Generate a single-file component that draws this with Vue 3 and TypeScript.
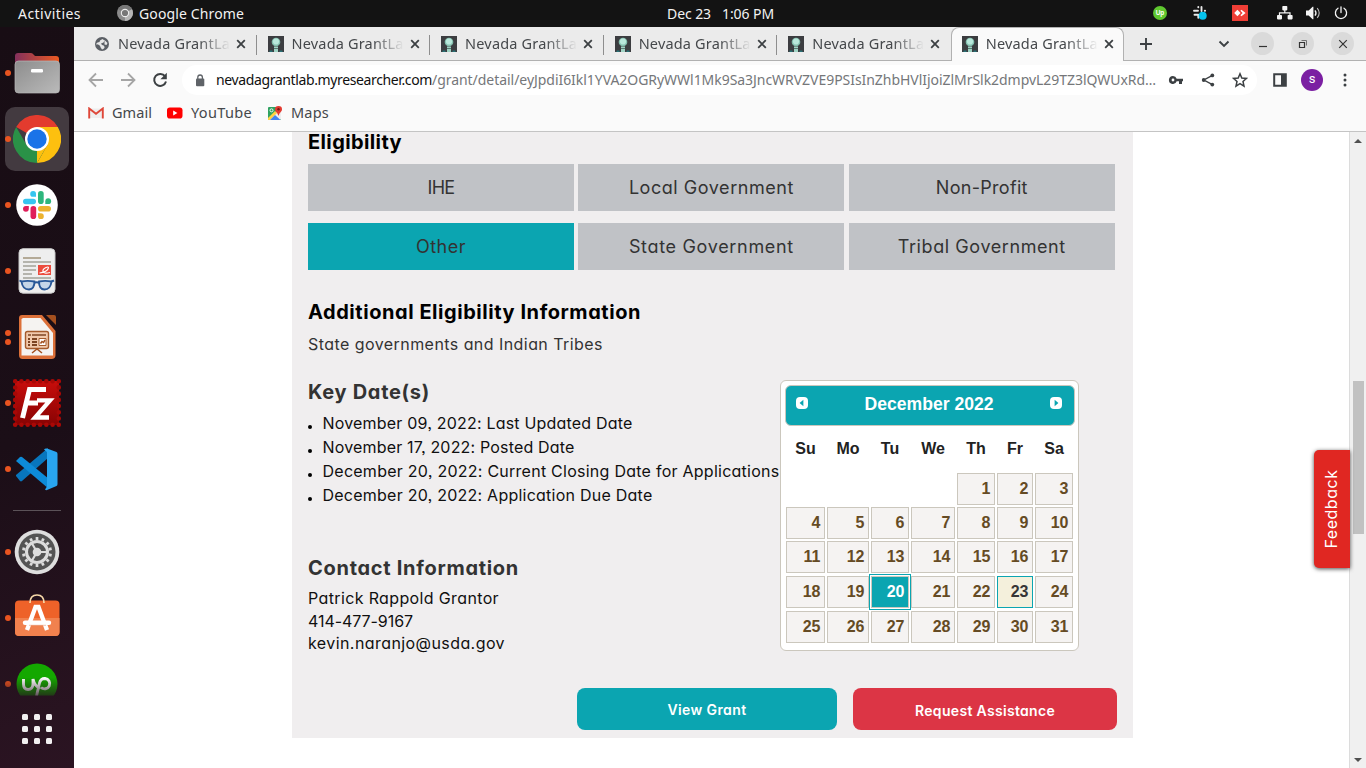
<script setup lang="ts">
import type { Directive } from 'vue'

// Tracks a single line of text so that it spans the given width in pixels.
const vFit: Directive<HTMLElement, number> = {
  mounted(el, { value }) {
    const chars = (el.textContent ?? '').trim().length
    const natural = parseFloat(getComputedStyle(el).width)
    if (chars > 0 && natural > 0) el.style.letterSpacing = `${(value - natural) / chars}px`
  },
}

interface Label { text: string; width: number }
interface Eligibility extends Label { active?: boolean }

const tabs = [0, 1, 2, 3, 4, 5]
const dockApps = ['files', 'chrome', 'slack', 'reader', 'impress', 'filezilla', 'code'] as const
const dockTools = ['settings', 'software', 'upwork'] as const

const eligibility: Eligibility[] = [
  { text: 'IHE', width: 27 },
  { text: 'Local Government', width: 165 },
  { text: 'Non-Profit', width: 92 },
  { text: 'Other', width: 50, active: true },
  { text: 'State Government', width: 165 },
  { text: 'Tribal Government', width: 168 },
]

const keyDates: Label[] = [
  { text: 'November 09, 2022: Last Updated Date', width: 310 },
  { text: 'November 17, 2022: Posted Date', width: 252 },
  { text: 'December 20, 2022: Current Closing Date for Applications', width: 457 },
  { text: 'December 20, 2022: Application Due Date', width: 330 },
]

const contact: Label[] = [
  { text: 'Patrick Rappold Grantor', width: 191 },
  { text: '414-477-9167', width: 105 },
  { text: 'kevin.naranjo@usda.gov', width: 197 },
]

const dayNames = ['Su', 'Mo', 'Tu', 'We', 'Th', 'Fr', 'Sa']
const firstWeekday = 4
const weeks: number[][] = Array.from({ length: 5 }, (_, w) =>
  Array.from({ length: 7 }, (_, d) => w * 7 + d - firstWeekday + 1),
)
const teeth = Array.from({ length: 14 }, (_, i) => (i * 360) / 14)
</script>

<template>
  <div class="desktop">
    <header class="topbar">
      <span class="activities"><span v-fit="63" class="fit">Activities</span></span>
      <svg class="top-chrome" width="16" height="16" viewBox="0 0 16 16">
        <circle cx="8" cy="8" r="8" fill="#8b8b8b" />
        <path d="M8 8 1 4.2A8 8 0 0 1 15 4.2Z" fill="#777" />
        <path d="M8 8 15 4.2A8 8 0 0 1 8 16Z" fill="#b5b5b5" />
        <circle cx="8" cy="8" r="4.2" fill="#eee" />
        <circle cx="8" cy="8" r="3.1" fill="#777" />
      </svg>
      <span v-fit="105" class="fit">Google Chrome</span>
      <span class="clock"><span v-fit="44" class="fit">Dec 23</span><span v-fit="52" class="fit">1:06 PM</span></span>
      <span class="tray">
        <svg width="14" height="14" viewBox="0 0 14 14"><circle cx="7" cy="7" r="7" fill="#5fc82f" /><text x="7" y="9.2" text-anchor="middle" class="up-mini">Up</text></svg>
        <svg width="16" height="16" viewBox="0 0 16 16" fill="none" stroke="#e8e8e8" stroke-width="1.9" stroke-linecap="round">
          <path d="M2 5.700h4M6.300 2v.3M9.500 2v4M12.800 5.700h.3M2.500 9.700h3M6.300 9.800v3" /><circle cx="10.700" cy="10.700" r="4" fill="#05c3ee" stroke="none" />
        </svg>
        <svg width="16" height="16" viewBox="0 0 16 16"><path fill="#ef3e36" d="M0 0h16v16H0z" /><path fill="#fff" d="m5.400 4.800 3.200 3.200-3.200 3.200L2.200 8zM9.400 4.800 13.600 8l-4.200 3.200-1-1L10.600 8 8.400 5.800z" /></svg>
        <svg width="16" height="14" viewBox="0 0 16 14" fill="#f4f4f4"><rect x="5.3" y="0" width="5" height="4.4" rx=".8" /><rect x="0" y="9" width="5" height="4.4" rx=".8" /><rect x="10.6" y="9" width="5" height="4.4" rx=".8" /><path d="M7.2 4h1.2v2.2h5.2V9h-1.2V7.4H3.1V9H1.9V6.2h5.3z" /></svg>
        <svg width="15" height="14" viewBox="0 0 15 14" fill="none" stroke="#f4f4f4"><path fill="#f4f4f4" stroke="none" d="M0 4.6h2.7L6.6.8h.8v12.4h-.8L2.7 9.4H0z" /><path d="M9 4.3q2 2.7 0 5.4" stroke-width="1.3" /><path d="M11.2 2.2q4 4.8 0 9.6" stroke="#bbb" stroke-width="1.1" /></svg>
        <svg width="14" height="14" viewBox="0 0 14 14" fill="none" stroke="#f4f4f4" stroke-width="1.3" stroke-linecap="round"><path d="M7 .8v5.700M4 2.200a5.600 5.600 0 1 0 6 0" /></svg>
      </span>
    </header>

    <div class="workspace">
      <aside class="dock">
        <div v-for="app in dockApps" :key="app" class="slot" :class="{ focused: app === 'chrome' }">
          <span class="dots"><i /><i v-if="app === 'impress'" /></span>
          <svg v-if="app === 'files'" width="48" height="48" viewBox="0 0 48 48">
            <defs><linearGradient id="tabg"><stop stop-color="#84305c" /><stop offset="1" stop-color="#ec5a22" /></linearGradient><linearGradient id="box" x1="0" y1="0" x2="1" y2="1"><stop stop-color="#8d8d8d" /><stop offset="1" stop-color="#bababa" /></linearGradient></defs>
            <path d="M2 7q0-3 3-3h13q1.500 0 3 2l1 1h21q3 0 3 3v18H2z" fill="url(#tabg)" />
            <rect x="2" y="12" width="44.500" height="32" rx="3.500" fill="url(#box)" stroke="#b9b9b9" stroke-width=".7" /><rect x="18" y="20" width="12" height="3.400" rx="1.200" fill="#fff" />
          </svg>
          <svg v-else-if="app === 'chrome'" width="48" height="48" viewBox="0 0 48 48">
            <path d="M24 24 3.200 12A24 24 0 0 1 44.800 12Z" fill="#e33b2e" /><path d="M24 12H44.800A24 24 0 0 1 24 48L34.400 30Z" fill="#fdc00f" /><path d="M3.200 12 13.600 30 24 36H30.900L24 48A24 24 0 0 1 3.200 12Z" fill="#2a9147" /><path d="M24 36 34.400 30 24 48Z" fill="#fdc00f" />
            <circle cx="24" cy="24" r="12" fill="#fff" /><circle cx="24" cy="24" r="9.700" fill="#1a73e8" />
          </svg>
          <svg v-else-if="app === 'slack'" width="48" height="48" viewBox="0 0 48 48">
            <circle cx="24" cy="24" r="20.800" fill="#fff" />
            <g fill="#36c5f0"><rect x="10" y="17.700" width="13" height="5.600" rx="2.800" /><path d="M23 15.800h-2.800A2.900 2.900 0 1 1 23 13z" /></g>
            <g fill="#2eb67d"><rect x="25" y="10" width="5.700" height="13" rx="2.800" /><path d="M32.300 23v-2.800a2.900 2.900 0 1 1 2.900 2.900z" /></g>
            <g fill="#ecb22e"><rect x="25" y="25" width="13" height="5.600" rx="2.800" /><path d="M25 32.300h2.800a2.900 2.900 0 1 1-2.800 2.900z" /></g>
            <g fill="#e01e5a"><rect x="17.500" y="25" width="5.700" height="13" rx="2.800" /><path d="M15.800 25v2.800a2.900 2.900 0 1 1-2.900-2.900z" /></g>
          </svg>
          <svg v-else-if="app === 'reader'" width="48" height="48" viewBox="0 0 48 48">
            <rect x="6" y="1.700" width="36" height="44.500" rx="4" fill="#eee" stroke="#c9c9c9" />
            <path d="M10 11h18" stroke="#b4aa97" stroke-width="2" /><path d="M10 15h28M10 19h13M10 23h13M10 27h9M10 31h28" stroke="#b5b4ad" stroke-width="1.800" />
            <path fill="#ec4b3d" d="M25 18h13v10H25z" /><path d="M26.500 26q7-1 8.500-4t-2-1.500-3 4 7 1" fill="none" stroke="#fff" stroke-width="1.200" />
            <g fill="#c5d6e8" stroke="#285898" stroke-width="1.900"><path d="M8.500 34.500q6-1.300 13 0 0 7.500-5.500 8-6.500 0-7.500-8zM26 34.500q6-1.300 12.500 0-1 8-7 8-5.500 0-5.500-8z" /><path d="M21 36q2.500-1.500 5.500 0M6.500 33.500l2 1M41 33.500l-2.500 1" fill="none" /></g>
          </svg>
          <svg v-else-if="app === 'impress'" width="48" height="48" viewBox="0 0 48 48">
            <path d="M9 2h20l13.500 16v24q0 4-4 4H9.500Q6 46 6 42V5q0-3 3-3z" fill="#dc7039" /><path d="M10 5h17.500L40 20v22.500H8.500V6z" fill="#f5f3f1" /><path d="M33 2h8q2 0 2 2v8z" fill="#a5501f" />
            <rect x="12.500" y="18.500" width="23" height="17" rx="2" fill="#f1c9ac" stroke="#a45a2c" stroke-width="1.400" /><path d="M15 22h3m1 0h14" stroke="#7d4423" stroke-width="1.600" /><path d="M15 26h2m2 0h5M15 29h2m2 0h5M15 32h2m2 0h5" stroke="#7d4423" stroke-width="2" /><path d="M26 25.500h7v7h-7z" fill="#fff" stroke="#a45a2c" /><path d="m27.500 30.500 1.500-2 1.500 1 1.500-2.500M19 40l5-4 5 4" fill="none" stroke="#a4501f" stroke-width="1.500" />
          </svg>
          <svg v-else-if="app === 'filezilla'" width="50" height="50" viewBox="0 0 50 50">
            <defs><linearGradient id="fz" x1="0" y1="0" x2="0" y2="1"><stop stop-color="#c80d0b" /><stop offset="1" stop-color="#880303" /></linearGradient></defs>
            <rect x="3" y="3" width="44" height="44" fill="url(#fz)" /><rect x="3.200" y="3.200" width="43.600" height="43.600" fill="none" stroke="#a90806" stroke-width="4.600" stroke-dasharray="0 6.228" stroke-linecap="round" />
            <g fill="none" stroke="#fff" stroke-width="5"><path d="M10.500 40 17.500 11.500H34M13 25h13" /><path d="M25 22.300H38L23 39.500H37" stroke-width="4.300" /></g>
          </svg>
          <svg v-else width="48" height="48" viewBox="0 0 48 48">
            <path d="m3 31 4 5q1 .8 2 0L35 13V3L3 30z" fill="#0876bd" /><path d="m3 16 4-4q1-.7 2 0l27 22v10z" fill="#0d8bd8" /><path d="M34 3.500 43.500 7q1 .5 1 2v30q0 1.500-1 2L34 45q-1 .5-2-.5l2-3V7L31 4.500q1-1.500 3-1z" fill="#29a5ef" />
          </svg>
        </div>
        <div class="rule" />
        <div v-for="app in dockTools" :key="app" class="slot" :class="{ fading: app === 'upwork' }">
          <span class="dots"><i /></span>
          <svg v-if="app === 'settings'" width="48" height="48" viewBox="0 0 48 48">
            <circle cx="24" cy="24" r="22.300" fill="#dedede" /><circle cx="24" cy="24" r="18.500" fill="#545454" />
            <g stroke="#dcdcdc"><path v-for="a in teeth" :key="a" d="M24 12V9" stroke-width="2.700" :transform="`rotate(${a} 24 24)`" /></g>
            <circle cx="24" cy="24" r="10.500" fill="#545454" stroke="#dcdcdc" stroke-width="3" /><path d="m24 24 9 0M24 24l-5-8.500M24 24l-5 8.500" stroke="#dcdcdc" stroke-width="2.200" /><circle cx="24" cy="24" r="4.300" fill="#dcdcdc" />
          </svg>
          <svg v-else-if="app === 'software'" width="48" height="48" viewBox="0 0 48 48">
            <rect x="2" y="6.500" width="44.500" height="35.500" rx="4" fill="#ee6229" /><path d="M2 24h44.500v14q0 4-4 4H6q-4 0-4-4z" fill="#f1814e" /><path d="M17 9q0-8 7-8T31 9" fill="none" stroke="#f6d9a9" stroke-width="1.700" />
            <path d="m14 36 8.500-23h3L34 36" fill="none" stroke="#fff" stroke-width="4.300" /><path d="M12 28.700h24" stroke="#fff" stroke-width="4.400" stroke-linecap="round" /><path d="M16 31.300h17" stroke="#eba98c" stroke-width=".7" />
          </svg>
          <svg v-else width="48" height="48" viewBox="0 0 48 48">
            <circle cx="24" cy="24" r="20.500" fill="#14a800" /><path d="M10.500 19v5q0 5.500 4.600 5.500T20 24v-5q1.500 7 7 9.500M23.500 36l3-13q1-4.500 5.500-4.500a5.200 5.200 0 1 1-4 9" fill="none" stroke="#fff" stroke-width="2.900" />
          </svg>
        </div>
        <div class="app-grid"><i v-for="n in 9" :key="n" /></div>
      </aside>

      <main class="browser">
        <div class="tabstrip">
          <div v-for="t in tabs" :key="t" class="tab" :class="{ active: t === 5 }">
            <svg v-if="t === 0" width="16" height="16" viewBox="0 0 16 16"><circle cx="8" cy="8" r="7" fill="#5b5f65" /><path d="M2 8.500q1.500-.5 3 .5t1.500 2.200L8 13.500q3-1 2.500-2.800-.4-1.500-2.500-1.700l-1-1.500 2.500-1 1-2L8.500 3 6 4.500 5.500 6 3.500 6.500 2 8zM10.500 4l3 3-1 2-2-.5z" fill="#e6e6e6" /></svg>
            <svg v-else width="16" height="16" viewBox="0 0 16 16"><path fill="#3c3d40" d="M0 0h16v16H0z" /><circle cx="8" cy="6" r="4.300" fill="#84bfae" /><circle cx="8" cy="5.500" r="3.100" fill="#b9e8db" /><path d="M6 10.500h4V16H6z" fill="#a0d4c5" /><path d="M6 12.500h4" stroke="#58766f" /><path d="M1.500 15.300h3M11.500 15.300h3" stroke="#287277" stroke-width="1.500" /></svg>
            <span class="tab-title"><span v-fit="112" class="fit">Nevada GrantLa</span></span>
            <svg class="tab-x" width="10" height="10" viewBox="0 0 10 10"><path d="m1.200 1.200 7.600 7.600m0-7.600-7.600 7.600" stroke="#3c4043" stroke-width="1.800" /></svg>
          </div>
          <svg class="plus" width="12" height="12" viewBox="0 0 12 12"><path d="M6 0v12M0 6h12" stroke="#3c4043" stroke-width="1.900" /></svg>
          <svg class="chev" width="12" height="8" viewBox="0 0 12 8"><path d="m1.500 1.500 4.500 4.500 4.500-4.500" fill="none" stroke="#3c4043" stroke-width="1.900" /></svg>
          <span class="win"><svg width="10" height="10" viewBox="0 0 10 10"><path d="M1 7.500h8" stroke="#333" stroke-width="1.200" /></svg></span>
          <span class="win"><svg width="10" height="10" viewBox="0 0 10 10" fill="none" stroke="#333"><path d="M1.500 3.500h5v5h-5z" stroke-width="1.200" /><path d="M3.500 1.500h5v5" stroke="#666" stroke-width=".9" /></svg></span>
          <span class="win"><svg width="10" height="10" viewBox="0 0 10 10"><path d="m1.200 1.200 7.600 7.600m0-7.600-7.600 7.600" stroke="#333" stroke-width="1.200" /></svg></span>
        </div>

        <div class="toolbar">
          <svg width="16" height="16" viewBox="0 0 16 16" fill="none" stroke="#a5a5a5" stroke-width="1.800"><path d="M15 8H2M8 1.500 1.500 8 8 14.500" /></svg>
          <svg width="16" height="16" viewBox="0 0 16 16" fill="none" stroke="#a5a5a5" stroke-width="1.800"><path d="M1 8h13M8 1.500 14.500 8 8 14.500" /></svg>
          <svg width="16" height="16" viewBox="0 0 16 16"><path d="M13.100 4.400A6 6 0 1 0 14 9.500" fill="none" stroke="#3c4043" stroke-width="2" /><path d="M14.800.8v6.400H8.400z" fill="#3c4043" /></svg>
          <div class="omnibox">
            <svg width="10" height="13" viewBox="0 0 10 13"><rect x="1" y="4.600" width="8.300" height="7.700" rx="1" fill="#5f6368" /><path d="M2.800 5V3.300a2.300 2.300 0 0 1 4.600 0V5" fill="none" stroke="#5f6368" stroke-width="1.300" /></svg>
            <span class="url"><span v-fit="216" class="fit host">nevadagrantlab.myresearcher.com</span><span v-fit="724" class="fit path">/grant/detail/eyJpdiI6Ikl1YVA2OGRyWWl1Mk9Sa3JncWRVZVE9PSIsInZhbHVlIjoiZlMrSlk2dmpvL29TZ3lQWUxRd…</span></span>
            <svg class="key" width="16" height="10" viewBox="0 0 16 10"><path d="M5 1a4 4 0 1 0 3.700 5.300H11V9h3V6.300h1V3.700H8.700A4 4 0 0 0 5 1zm0 2.600a1.400 1.400 0 1 1 0 2.800 1.400 1.400 0 0 1 0-2.800z" fill="#3c4043" fill-rule="evenodd" /></svg>
            <svg class="share" width="14" height="14" viewBox="0 0 14 14"><path d="M11.500 2.300 2.800 7l8.700 4.700" fill="none" stroke="#3c4043" stroke-width="1.400" /><g fill="#3c4043"><circle cx="11.300" cy="2.400" r="1.900" /><circle cx="2.700" cy="7" r="1.900" /><circle cx="11.300" cy="11.600" r="1.900" /></g></svg>
            <svg class="star" width="16" height="16" viewBox="0 0 16 16"><path d="m8 1.800 1.800 4.200 4.700.4-3.500 3.100 1 4.600L8 11.700l-4 2.400 1-4.600-3.500-3.100 4.700-.4z" fill="none" stroke="#3c4043" stroke-width="1.500" /></svg>
          </div>
          <svg class="panel-icon" width="14" height="14" viewBox="0 0 14 14"><path d="M1.200 1.200h11.600v11.600H1.200z" fill="none" stroke="#3c4043" stroke-width="2" /><path d="M8 1h5v12H8z" fill="#3c4043" /></svg>
          <span class="avatar">s</span>
          <svg class="more" width="4" height="14" viewBox="0 0 4 14" fill="#3c4043"><circle cx="2" cy="2" r="1.500" /><circle cx="2" cy="7" r="1.500" /><circle cx="2" cy="12" r="1.500" /></svg>
        </div>

        <nav class="bookmarks">
          <svg width="16" height="12" viewBox="0 0 16 12"><path d="M1.500 1.500h13V11h-13z" fill="#eee" /><path d="M1.200 11.500V1.500L8 6.700l6.800-5.200v10" fill="none" stroke="#df4739" stroke-width="1.900" /></svg>
          <span v-fit="40" class="fit">Gmail</span>
          <svg class="yt" width="16" height="12" viewBox="0 0 16 12"><rect y=".4" width="15.500" height="11.200" rx="2.800" fill="#f00" /><path d="m6.200 3.600 4.200 2.400-4.200 2.400z" fill="#fff" /></svg>
          <span v-fit="61" class="fit">YouTube</span>
          <svg class="maps" width="16" height="16" viewBox="0 0 16 16"><rect x="1" y="2" width="13" height="13" rx="1" fill="#30a261" /><path d="m1 14 7-7 6-2v9l-1 1H2z" fill="#eee" /><path d="m1 13 7-7 2 2-7 7H1z" fill="#fed343" /><path d="m3 15 5-5 5.500 5z" fill="#4485ef" /><circle cx="4.500" cy="5.300" r="1.500" fill="none" stroke="#fff" stroke-width=".9" /><path d="M11.500 1q3.500 0 3.500 3.300c0 2.700-2.700 3.200-3.200 6.200h-.6C10.700 7.500 8 7 8 4.300Q8 1 11.500 1z" fill="#e33a30" /><circle cx="11.500" cy="4.200" r="1.200" fill="#771a14" /></svg>
          <span v-fit="38" class="fit">Maps</span>
        </nav>

        <div class="viewport">
          <section class="panel">
            <h2 class="first"><span v-fit="94" class="fit">Eligibility</span></h2>
            <div class="types">
              <div v-for="e in eligibility" :key="e.text" class="type" :class="{ on: e.active }"><span v-fit="e.width" class="fit">{{ e.text }}</span></div>
            </div>
            <h2 class="additional"><span v-fit="333" class="fit">Additional Eligibility Information</span></h2>
            <p class="note"><span v-fit="295" class="fit">State governments and Indian Tribes</span></p>

            <div class="details">
              <div class="info">
                <h2 class="soft"><span v-fit="122" class="fit">Key Date(s)</span></h2>
                <ul>
                  <li v-for="k in keyDates" :key="k.text"><i /><span v-fit="k.width" class="fit">{{ k.text }}</span></li>
                </ul>
                <h2 class="soft contact-title"><span v-fit="211" class="fit">Contact Information</span></h2>
                <p v-for="c in contact" :key="c.text" class="contact"><span v-fit="c.width" class="fit">{{ c.text }}</span></p>
              </div>
              <div class="calendar">
                <div class="cal-head">
                  <svg width="12" height="12" viewBox="0 0 12 12"><rect width="12" height="12" rx="4" fill="#fff" /><path d="M7.400 2.700v6.600L3.600 6z" fill="#0ba5b1" /></svg>
                  <b>December 2022</b>
                  <svg width="12" height="12" viewBox="0 0 12 12"><rect width="12" height="12" rx="4" fill="#fff" /><path d="M4.600 2.700v6.600L8.400 6z" fill="#0ba5b1" /></svg>
                </div>
                <div class="week names"><span v-for="n in dayNames" :key="n">{{ n }}</span></div>
                <div v-for="(w, i) in weeks" :key="i" class="week">
                  <template v-for="d in w" :key="d">
                    <span v-if="d < 1" />
                    <span v-else class="day" :class="{ due: d === 20, today: d === 23 }">{{ d }}</span>
                  </template>
                </div>
              </div>
            </div>

            <div class="actions">
              <button class="view"><span v-fit="79" class="fit">View Grant</span></button>
              <button class="request"><span v-fit="140" class="fit">Request Assistance</span></button>
            </div>
          </section>
          <div class="feedback"><span v-fit="79" class="fit">Feedback</span></div>
          <div class="scrollbar">
            <svg width="8" height="5" viewBox="0 0 8 5"><path d="M0 5 4 1l4 4z" fill="#505050" /></svg>
            <div class="thumb" />
            <svg width="8" height="5" viewBox="0 0 8 5"><path d="m0 0 4 4 4-4z" fill="#505050" /></svg>
          </div>
        </div>
      </main>
    </div>
  </div>
</template>

<style>
body { margin: 0; overflow: hidden; }
</style>

<style scoped>
* { box-sizing: border-box; }
svg { display: block; flex: none; }
.fit { display: inline-block; white-space: pre; flex: none; }
.desktop { width: 1366px; height: 768px; overflow: hidden; display: flex; flex-direction: column; font-family: "Noto Sans", "Open Sans", sans-serif; background: #fff; }

.topbar { position: relative; height: 27px; flex: none; background: #131313; color: #f2f2f2; display: flex; align-items: center; font-size: 14px; padding: 0 0 1px 18px; }
.activities { width: 99px; }
.top-chrome { margin-right: 6px; }
.clock { display: flex; gap: 11px; margin-left: 423px; }
.tray { display: flex; align-items: center; margin-left: auto; padding-right: 18px; }
.tray svg:nth-child(2) { margin-left: 25px; }
.tray svg:nth-child(3) { margin-left: 24px; }
.tray svg:nth-child(4) { margin-left: 29px; }
.tray svg:nth-child(5) { margin-left: 13px; }
.tray svg:nth-child(6) { margin-left: 13px; }
.up-mini { font: bold 6.5px "Liberation Sans", sans-serif; fill: #fff; }

.workspace { flex: 1; display: flex; min-height: 0; }
.dock { width: 74px; flex: none; background: linear-gradient(160deg, #180d14 0%, #1b0e17 55%, #2b1422 100%); padding-top: 14px; display: flex; flex-direction: column; align-items: center; }
.slot { position: relative; width: 64px; height: 64px; margin-bottom: 2px; border-radius: 10px; display: flex; align-items: center; justify-content: center; flex: none; }
.slot.focused { background: #433a40; }
.dots { position: absolute; left: 0; top: 0; height: 64px; display: flex; flex-direction: column; justify-content: center; gap: 3px; }
.dots i { width: 6px; height: 6px; border-radius: 50%; background: #e95420; }
.rule { width: 48px; height: 1px; background: #5b5258; margin: 7px 0 9px; flex: none; }
.fading { -webkit-mask-image: linear-gradient(#000 40%, rgba(0, 0, 0, 0.3) 67%, transparent 69%); mask-image: linear-gradient(#000 40%, rgba(0, 0, 0, 0.3) 67%, transparent 69%); }
.app-grid { display: grid; grid-template-columns: repeat(3, 6px); grid-auto-rows: 6px; gap: 6px; margin-top: -4px; }
.app-grid i { background: #f2f0f1; border-radius: 1.5px; }

.browser { flex: 1; min-width: 0; display: flex; flex-direction: column; background: #fafafa; }
.tabstrip { height: 34px; flex: none; background: #ebebeb; border-bottom: 1px solid #b1b1b1; display: flex; align-items: center; padding-left: 9px; color: #45484b; font-size: 14.5px; }
.tab { position: relative; width: 173.550px; height: 34px; flex: none; display: flex; align-items: center; padding-left: 11px; }
.tab:not(.active):not(:nth-child(5))::after { content: ""; position: absolute; right: 0; top: 8px; width: 1px; height: 20px; background: #8e8e8e; }
.tab-title { width: 112px; margin: -2px 0 0 8px; overflow: hidden; -webkit-mask-image: linear-gradient(90deg, #000 72%, transparent 100%); mask-image: linear-gradient(90deg, #000 72%, transparent 100%); }
.tab-x { margin-left: 6px; }
.tab.active { border: 1px solid #b1b1b1; border-bottom: 0; background: #fafafa; border-radius: 8px 8px 0 0; height: 34px; margin-bottom: -1px; align-self: flex-start; padding: 0 0 1px 10px; }
.plus { margin-left: 16px; }
.chev { margin-left: 66px; margin-right: 10px; }
.win { width: 23px; height: 23px; border-radius: 50%; background: #dadada; margin-left: 17px; display: grid; place-items: center; }
.chev + .win { margin-left: 11px; }

.toolbar { height: 38px; flex: none; display: flex; align-items: center; padding-left: 14px; }
.toolbar > svg + svg { margin-left: 16px; }
.omnibox { width: 1075px; height: 30px; margin-left: 14px; border-radius: 15px; background: #fff; display: flex; align-items: center; padding-left: 13px; }
.url { width: 940px; margin: -2px 0 0 11px; display: flex; font-size: 14px; }
.host { color: #101010; }
.path { color: #75777a; }
.key { margin-left: 12px; }
.share { margin-left: 17px; }
.star { margin-left: 17px; }
.toolbar > .panel-icon { margin-left: 16px; }
.avatar { width: 22px; height: 22px; margin: 0 20px 0 14px; border-radius: 50%; background: #7b1fa2; color: #fff; font: 13px/20px Roboto, sans-serif; text-align: center; }

.bookmarks { height: 33px; flex: none; border-bottom: 1px solid #c4c4c4; display: flex; align-items: center; padding: 0 0 5px 14px; font-size: 14.5px; color: #45484b; }
.bookmarks > span { margin: -1px 0 0 8px; }
.yt { margin-left: 15px; }
.maps { margin-left: 15px; }

.viewport { position: relative; flex: 1; min-height: 0; display: flex; overflow: hidden; background: #fff; font-family: Inter, "Open Sans", sans-serif; font-feature-settings: "cv11", "ss03"; }
.panel { width: 841px; height: 606px; flex: none; margin-left: 218px; padding: 0 16px; background: #f0eeef; }
h2 { margin: 0; font-size: 20px; line-height: 30px; height: 30px; font-weight: 700; color: #000; }
h2 .fit { vertical-align: top; }
h2.first { height: 25px; line-height: 20px; }
.types { margin-top: 7px; display: grid; grid-template-columns: repeat(3, 266px); gap: 12px 4.400px; }
.type { height: 47px; background: #c0c2c6; color: #333; display: grid; place-items: center; font-size: 18px; }
.type.on { background: #0ba5b1; }
.additional { margin-top: 27px; }
p { margin: 0; display: flex; align-items: center; }
.note { margin-top: 5px; height: 24px; font-size: 16px; color: #333; }
.details { display: flex; height: 332px; padding-top: 21px; }
.info { width: 472px; flex: none; }
.soft { color: #333; }
ul { margin: 4px 0 0; padding: 0; list-style: none; font-size: 16px; color: #101010; }
li { height: 24px; display: flex; align-items: center; }
li i { width: 4px; height: 4px; border-radius: 50%; background: #000; margin: 7px 10.500px 0 0; }
.contact-title { margin: 46px 0 4px; }
.contact { height: 22.600px; font-size: 16px; color: #101010; }

.calendar { width: 299px; height: 271px; flex: none; margin-top: 3px; padding: 4px 3px 4px 4px; background: #fff; border: 1px solid #cbc7bd; border-radius: 6px; font: bold 16px "Liberation Sans", Arial, sans-serif; }
.cal-head { height: 41px; border: 1px solid #cbc7bd; border-radius: 6px; background: #0ba5b1; color: #fff; font-size: 17.600px; display: flex; justify-content: space-between; padding: 8px 12px 0 10px; line-height: 20px; }
.cal-head svg { margin-top: 3px; }
.week { display: grid; grid-template-columns: 39px 42px 38px 44px 38px 36px 38px; column-gap: 2px; margin: 2px 0 0 1px; height: 32px; }
.week:nth-child(n + 6) { margin-top: 3px; }
.names { height: 47px; margin: 0 0 0 1px; line-height: 45px; text-align: center; color: #222; }
.names + .week { margin-top: 0; }
.day { border: 1px solid #cbc7bd; background: #f5f3f2; color: #654b24; text-align: right; padding-right: 3.500px; line-height: 30px; }
.due { background: #0ba5b1; border: 1px solid #cbc7bd; color: #fff; outline: 1px solid #0ba5b1; outline-offset: 1px; }
.today { background: #f4f0dc; border-color: #0ba5b1; color: #363636; }

.actions { display: flex; gap: 16px; padding-left: 269px; }
button { height: 42px; border: 0; border-radius: 8px; color: #fff; font: 600 14px Inter, sans-serif; font-feature-settings: "cv11", "ss03"; padding: 0; display: grid; place-items: center; flex: none; }
.view { width: 260px; background: #0ba5b1; }
.request { width: 264px; background: #dc3545; }
.request .fit { margin-top: 3px; }

.feedback { position: absolute; left: 1240px; top: 318px; width: 36px; height: 118px; background: #e02722; color: #fff; border-radius: 5px 0 0 5px; box-shadow: 0 1px 4px rgba(0, 0, 0, 0.7); display: flex; align-items: center; justify-content: center; font-size: 16px; padding-right: 3px; }
.feedback .fit { transform: rotate(-90deg); }
.scrollbar { width: 17px; margin-left: auto; border-left: 1px solid #dcdcdc; background: #f0f0f0; display: flex; flex-direction: column; align-items: center; padding: 6px 0 5px; justify-content: space-between; }
.thumb { width: 11px; height: 153px; background: #c1c1c1; margin-top: 238px; margin-bottom: auto; }
</style>
